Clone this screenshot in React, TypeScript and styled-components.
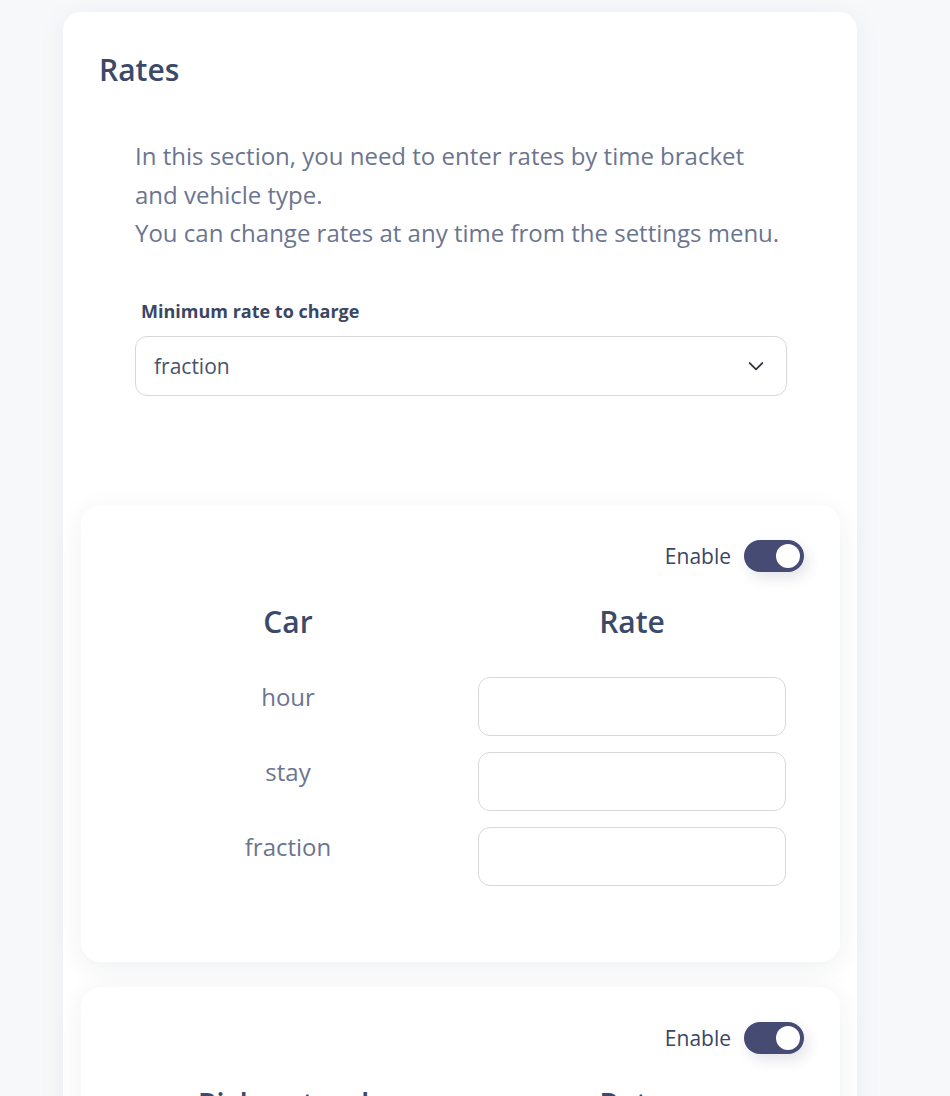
import React from "react";
import styled, { createGlobalStyle } from "styled-components";

const Global = createGlobalStyle`
  html, body { margin: 0; padding: 0; background: #f7f8fa; }
  body { font-family: "Open Sans", "Noto Sans", sans-serif; }
  * { box-sizing: border-box; }
`;

const Page = styled.div`
  padding: 12px 0 0 63px;
  height: 1096px;
  overflow: hidden;
`;

const MainCard = styled.section`
  width: 794px;
  background: #ffffff;
  border-radius: 18px;
  box-shadow: 0 4px 30px rgba(30, 40, 70, 0.05);
  padding: 38px 17px 40px 18px;
  display: flex;
  flex-direction: column;
`;

const Title = styled.h1`
  margin: 0 0 0 18px;
  font-size: 30px;
  line-height: 40px;
  font-weight: 600;
  color: #3b4a69;
`;

const Intro = styled.div`
  margin: 47px 0 0 54px;
  font-size: 24px;
  line-height: 38.6px;
  color: #6c7590;
`;

const Field = styled.div`
  margin: 46px 53px 0 54px;
  display: flex;
  flex-direction: column;
  gap: 13px;
`;

const FieldLabel = styled.label`
  padding-left: 6px;
  font-size: 18px;
  line-height: 24px;
  font-weight: 700;
  color: #3a4664;
`;

const Select = styled.div`
  height: 60px;
  border: 1px solid #d6d8dc;
  border-radius: 12px;
  display: flex;
  align-items: center;
  justify-content: space-between;
  padding: 0 20px 0 18px;
  font-size: 21px;
  color: #4a5368;
`;

const VehicleCard = styled.div<{ $first?: boolean }>`
  margin-top: ${(p) => (p.$first ? "109px" : "25px")};
  background: #ffffff;
  border-radius: 20px;
  box-shadow: 0 6px 28px rgba(30, 40, 70, 0.07);
  padding: 35px 36px 76px 54px;
`;

const EnableRow = styled.div`
  display: flex;
  justify-content: flex-end;
  align-items: center;
  gap: 13px;
  font-size: 21px;
  line-height: 32px;
  color: #3a4664;
`;

const Toggle = styled.div<{ $on: boolean }>`
  width: 60px;
  height: 32px;
  border-radius: 16px;
  background: ${(p) => (p.$on ? "#464b74" : "#c8ccd6")};
  display: flex;
  align-items: center;
  justify-content: ${(p) => (p.$on ? "flex-end" : "flex-start")};
  padding: 0 4px;
  box-shadow: 4px 6px 14px rgba(30, 40, 70, 0.12);
`;

const Knob = styled.div`
  width: 24px;
  height: 24px;
  border-radius: 50%;
  background: #ffffff;
`;

const RateGrid = styled.div`
  margin-top: 30px;
  margin-right: 18px;
  display: grid;
  grid-template-columns: 306fr 308fr;
  column-gap: 37px;
  row-gap: 16px;
`;

const ColHead = styled.div`
  text-align: center;
  font-size: 30px;
  line-height: 40px;
  font-weight: 600;
  color: #3b4a69;
  margin-bottom: 19px;
`;

const RowLabel = styled.div`
  text-align: center;
  padding-top: 4px;
  font-size: 24px;
  line-height: 32px;
  color: #6c7590;
`;

const RateInput = styled.input`
  height: 59px;
  width: 100%;
  border: 1px solid #d6d8dc;
  border-radius: 12px;
  padding: 0 16px;
  font-family: inherit;
  font-size: 18px;
  outline: none;
  background: #fff;
`;

const Chevron = () => (
  <svg width="20" height="20" viewBox="0 0 24 24" fill="none" stroke="#2f3442" strokeWidth="2.2" strokeLinecap="round" strokeLinejoin="round">
    <path d="M4.5 8.5l7.5 7.5 7.5-7.5" />
  </svg>
);

const vehicles = [
  { name: "Car", rows: ["hour", "stay", "fraction"] },
  { name: "Pickup truck", rows: ["hour", "stay", "fraction"] },
];

export default function App() {
  return (
    <>
      <Global />
      <Page>
        <MainCard>
          <Title>Rates</Title>
          <Intro>
            In this section, you need to enter rates by time bracket
            <br />
            and vehicle type.
            <br />
            You can change rates at any time from the settings menu.
          </Intro>
          <Field>
            <FieldLabel>Minimum rate to charge</FieldLabel>
            <Select>
              <span>fraction</span>
              <Chevron />
            </Select>
          </Field>
          {vehicles.map((v, i) => (
            <VehicleCard key={v.name} $first={i === 0}>
              <EnableRow>
                <span>Enable</span>
                <Toggle $on>
                  <Knob />
                </Toggle>
              </EnableRow>
              <RateGrid>
                <ColHead>{v.name}</ColHead>
                <ColHead>Rate</ColHead>
                {v.rows.map((r) => (
                  <React.Fragment key={r}>
                    <RowLabel>{r}</RowLabel>
                    <RateInput />
                  </React.Fragment>
                ))}
              </RateGrid>
            </VehicleCard>
          ))}
        </MainCard>
      </Page>
    </>
  );
}
